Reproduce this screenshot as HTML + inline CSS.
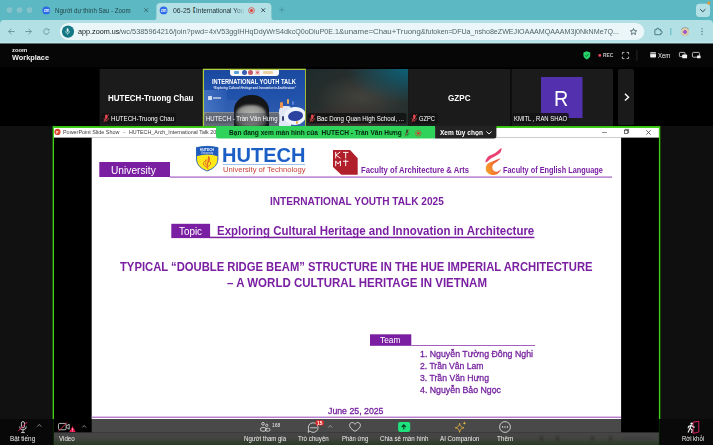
<!DOCTYPE html>
<html lang="vi"><head><meta charset="utf-8"><title>Zoom</title>
<style>
html,body{margin:0;padding:0;background:#000;}
body{width:713px;height:445px;position:relative;overflow:hidden;font-family:"Liberation Sans","Noto Sans CJK SC",sans-serif;}
.a{position:absolute;}
.t{position:absolute;white-space:nowrap;line-height:normal;transform-origin:0 0;}
svg{position:absolute;overflow:visible;}
.tile{position:absolute;top:69px;height:57.2px;background:#1b1b1b;}
.pill{position:absolute;background:rgba(18,18,18,.88);border-radius:2px;height:10.6px;top:113px;}
</style></head><body>

<!-- ============ browser chrome ============ -->
<svg style="left:0px;top:0px" width="713" height="27"><rect x="0" y="0" width="713" height="27" fill="#5cb8c2"/></svg>
<svg style="left:0px;top:20px" width="713" height="24"><path d="M4 0H709A4 4 0 0 1 713 4V23.4H0V4A4 4 0 0 1 4 0Z" fill="#b3e0e5"/></svg>
<div class="a" style="left:0;top:41.2px;width:713px;height:2.2px;background:linear-gradient(#b3e0e5,#c6e9ed);"></div>
<!-- traffic lights -->
<svg style="left:6px;top:7px" width="7" height="6"><ellipse cx="3.5" cy="3.1" rx="2.8" ry="2.8" fill="#86c2c9"/></svg>
<svg style="left:16px;top:7px" width="7" height="6"><ellipse cx="3.5" cy="3.1" rx="2.8" ry="2.8" fill="#86c2c9"/></svg>
<svg style="left:26px;top:7px" width="7" height="6"><ellipse cx="3.5" cy="3.1" rx="2.8" ry="2.8" fill="#86c2c9"/></svg>
<!-- tab 1 -->
<svg style="left:42px;top:6px" width="9" height="9"><ellipse cx="4.3" cy="4.4" rx="3.9" ry="3.9" fill="#2b6be6"/></svg>
<svg style="left:143.8px;top:8.2px" width="4.4" height="4.4" viewBox="0 0 4.4 4.4"><path d="M.3.3 4.1 4.1M4.1.3.3 4.1" stroke="#2c4f55" stroke-width=".7" fill="none"/></svg>
<!-- active tab -->
<svg style="left:156px;top:3px" width="116" height="18"><path d="M4.4 0H111.4A4 4 0 0 1 115.4 4V18H0.4V4A4 4 0 0 1 4.4 0Z" fill="#b3e0e5"/></svg>
<svg style="left:152px;top:16px" width="5" height="5"><path d="M.4 4.4A4 4 0 0 0 4.4 .4V4.4Z" fill="#b3e0e5"/></svg>
<svg style="left:271px;top:16px" width="5" height="5"><path d="M4.4 4.4A4 4 0 0 1 .4 .4V4.4Z" fill="#b3e0e5"/></svg>
<svg style="left:159px;top:6px" width="9" height="9"><ellipse cx="4.6" cy="4.4" rx="3.9" ry="3.9" fill="#2b6be6"/></svg>
<span class="a" style="left:189.6px;top:7px;font-size:6px;line-height:1;font-weight:700;color:#1f2f33;font-family:'Noto Sans CJK SC',sans-serif;">【</span>
<svg style="left:248.1px;top:6.9px" width="7" height="7" viewBox="0 0 7 7"><circle cx="3.5" cy="3.5" r="2.9" fill="none" stroke="#e3342f" stroke-width=".7"/><circle cx="3.5" cy="3.5" r="1.5" fill="#e3342f"/></svg>
<svg style="left:261px;top:8.2px" width="4.4" height="4.4" viewBox="0 0 4.4 4.4"><path d="M.3.3 4.1 4.1M4.1.3.3 4.1" stroke="#1f2f33" stroke-width=".8" fill="none"/></svg>
<svg style="left:278.6px;top:7.2px" width="5.6" height="5.6" viewBox="0 0 5.6 5.6"><path d="M2.8.2V5.4M.2 2.8H5.4" stroke="#3f8f99" stroke-width=".7" fill="none"/></svg>
<!-- tab dropdown -->
<svg style="left:696px;top:3px" width="14" height="14"><rect x="0" y="0.7" width="14" height="13.2" rx="3.5" fill="#b3e0e5"/></svg>
<svg style="left:700.2px;top:8.6px" width="5.6" height="3.4" viewBox="0 0 5.6 3.4"><path d="M.5.5 2.8 2.8 5.1.5" stroke="#17343a" stroke-width=".9" fill="none" stroke-linecap="round"/></svg>
<svg style="left:707px;top:1px" width="4" height="4"><ellipse cx="1.8" cy="2" rx="1.5" ry="1.5" fill="#f0932b"/></svg>
<!-- nav icons -->
<svg style="left:7.5px;top:28.2px" width="7" height="7" viewBox="0 0 7 7"><path d="M6.6 3.5H.8M3.4.7.6 3.5 3.4 6.3" stroke="#5a8087" stroke-width=".75" fill="none"/></svg>
<svg style="left:25px;top:28.2px" width="7" height="7" viewBox="0 0 7 7"><path d="M.4 3.5H6.2M3.6.7 6.4 3.5 3.6 6.3" stroke="#5a8087" stroke-width=".75" fill="none"/></svg>
<svg style="left:43.2px;top:28.2px" width="7" height="7" viewBox="0 0 7 7"><path d="M6.1 3.5A2.7 2.7 0 1 1 5.2 1.5" stroke="#5a8087" stroke-width=".75" fill="none"/><path d="M6.3.4V2.3H4.4Z" fill="#5a8087"/></svg>
<!-- url pill -->
<svg style="left:59px;top:23px" width="586" height="18"><rect x="0.8" y="0" width="584.5" height="17.1" rx="8.6" fill="#eaf6f7"/></svg>
<svg style="left:61px;top:25px" width="14" height="13"><ellipse cx="7" cy="6.6" rx="6.1" ry="6.1" fill="#147985"/></svg>
<svg style="left:65.4px;top:28px" width="5.2" height="7" viewBox="0 0 5.2 7"><rect x="1.7" y=".2" width="1.8" height="3.6" rx=".9" fill="#e6f6f7"/><path d="M.5 3.1A2.1 2.1 0 0 0 4.7 3.1M2.6 5.2V6.6" stroke="#e6f6f7" stroke-width=".6" fill="none"/></svg>
<svg style="left:629.6px;top:28.2px" width="7" height="7" viewBox="0 0 7 7"><path d="M3.5.5 4.4 2.6 6.7 2.8 5 4.3 5.5 6.5 3.5 5.3 1.5 6.5 2 4.3.3 2.8 2.6 2.6Z" stroke="#274349" stroke-width=".7" fill="none" stroke-linejoin="round"/></svg>
<svg style="left:653.8px;top:27.4px" width="8.4" height="8.4" viewBox="0 0 8.4 8.4"><path d="M.9 2.6H2.7A1.15 1.15 0 1 1 4.9 2.6H6.7V4.2A1.15 1.15 0 1 1 6.7 6.4V7.7H.9Z" stroke="#33666e" stroke-width=".8" fill="none" stroke-linejoin="round"/></svg>
<svg style="left:670px;top:28px" width="2" height="7"><rect x="0.4" y="0" width="0.9" height="7" fill="#55b3bd"/></svg>
<div class="a" style="left:680.6px;top:27.4px;width:8.4px;height:8.4px;border-radius:50%;background:radial-gradient(circle at 50% 55%,#a05cc0 0 28%,#d9c9a8 30% 60%,#9aa8a0 62%);"></div>
<svg style="left:701px;top:28px" width="3" height="8"><circle cx="1" cy=".8" r=".65" fill="#3c6a72"/><circle cx="1" cy="3.5" r=".65" fill="#3c6a72"/><circle cx="1" cy="6.2" r=".65" fill="#3c6a72"/></svg>

<!-- ============ zoom header ============ -->
<svg style="left:0px;top:44px" width="713" height="24"><rect x="0" y="0.6" width="713" height="22.6" fill="#060606"/></svg>
<!-- shield -->
<svg style="left:582.6px;top:51px" width="7.6" height="8.6" viewBox="0 0 7.6 8.6"><path d="M3.8.2 7.2 1.4V4.2C7.2 6.2 5.6 7.7 3.8 8.4 2 7.7.4 6.2.4 4.2V1.4Z" fill="#27d36a"/><path d="M2.2 4.3 3.4 5.5 5.5 3.1" stroke="#062" stroke-width=".9" fill="none"/></svg>
<svg style="left:598px;top:54px" width="4" height="3"><ellipse cx="1.8" cy="1.4" rx="1.4" ry="1.4" fill="#f0475c"/></svg>
<svg style="left:622px;top:51.8px" width="7" height="7" viewBox="0 0 7 7"><path d="M.4 2.4V.4H2.4M4.6.4H6.6V2.4M6.6 4.6V6.6H4.6M2.4 6.6H.4V4.6" stroke="#e8e8e8" stroke-width=".75" fill="none"/></svg>
<svg style="left:636px;top:50px" width="2" height="11"><rect x="0.5" y="0" width="0.8" height="10.6" fill="#2e2e2e"/></svg>
<svg style="left:650px;top:52.4px" width="6.2" height="5.6" viewBox="0 0 6.2 5.6"><rect x=".2" y=".2" width="5.8" height="5.2" rx=".7" fill="#f0f0f0"/><rect x=".2" y="1.5" width="5.8" height=".6" fill="#070707"/></svg>
<svg style="left:679px;top:52px" width="8.4" height="6.6" viewBox="0 0 8.4 6.6"><rect x=".4" y=".4" width="5.6" height="4.2" rx=".8" fill="none" stroke="#f0f0f0" stroke-width=".75"/><rect x="3.2" y="2.6" width="4.9" height="3.7" rx=".6" fill="#f0f0f0"/></svg>
<svg style="left:692.4px;top:52px" width="8.8" height="6.6" viewBox="0 0 8.8 6.6"><rect x=".4" y=".4" width="7" height="4.8" rx="1" fill="none" stroke="#f0f0f0" stroke-width=".75"/><rect x="5" y="3.4" width="3.6" height="2.8" rx=".5" fill="#f0f0f0"/></svg>

<!-- ============ gallery ============ -->
<svg style="left:99px;top:69px" width="103" height="58"><rect x="0.6" y="0" width="102.3" height="57.2" fill="#1b1b1b"/></svg>
<!-- tile2 virtual bg -->
<svg style="left:202px;top:68px" width="104" height="59"><rect x="0.7" y="0.7" width="103.2" height="58" fill="#b0cc40"/></svg>
<div class="a" style="left:203.8px;top:69.8px;width:101px;height:56.9px;overflow:hidden;background:linear-gradient(180deg,#1b49a0 0,#2152ab 45%,#2a58ab 70%,#3560ac 100%);">
  <div class="a" style="left:0;top:20px;width:23px;height:24px;background:linear-gradient(90deg,rgba(96,140,214,.55),rgba(70,116,196,.25));filter:blur(.6px);"></div>
  <div class="a" style="left:23px;top:30px;width:14px;height:14px;background:rgba(60,104,186,.4);filter:blur(.6px);"></div>
  <div class="a" style="left:0;top:42.5px;width:80px;height:15px;background:linear-gradient(180deg,#858c98 0,#6d7482 60%,#5d6472 100%);filter:blur(.5px);"></div>
  <div class="a" style="left:25.8px;top:-1px;width:49.5px;height:7px;background:#f7f8fa;border-radius:0 0 3px 3px;"></div>
  <div class="a" style="left:30.5px;top:1.2px;width:4.4px;height:3.2px;background:#5aa0d8;border-radius:1px;"></div>
  <div class="a" style="left:37.9px;top:.4px;width:5px;height:5px;border-radius:50%;background:#3a5db4;"></div>
  <div class="a" style="left:44.7px;top:.4px;width:5px;height:5px;border-radius:50%;background:#c45a68;"></div>
  <div class="a" style="left:51.5px;top:.4px;width:5px;height:5px;border-radius:50%;background:#d65050;box-shadow:inset 0 0 0 1.2px #f7e3e3;"></div>
  <div class="a" style="left:59.5px;top:1.4px;width:10px;height:2.8px;background:#ecd3a4;border-radius:1px;"></div>
  <div class="a" style="left:4.6px;top:26.4px;width:3.4px;height:3.4px;background:#d5ddf0;border-radius:.5px;"></div>
  <div class="a" style="left:9px;top:27.4px;width:8px;height:1.5px;background:#9fb2dc;"></div>
  <!-- illustration -->
  <div class="a" style="left:75px;top:36px;width:12px;height:21px;border-radius:5px 3px 0 0;background:#dfe6f4;filter:blur(.5px);"></div>
  <div class="a" style="left:80px;top:37.6px;width:21.5px;height:18px;border-radius:50%;background:#eef2fa;transform:rotate(-8deg);"></div>
  <div class="a" style="left:84px;top:41.4px;width:15px;height:9.6px;border-radius:50%;background:#2b429e;transform:rotate(-8deg);"></div>
  <div class="a" style="left:76.6px;top:32.4px;width:2.6px;height:5.6px;border-radius:1.2px;background:#e9954a;"></div>
  <div class="a" style="left:83px;top:29.6px;width:2.2px;height:4.6px;border-radius:1.1px;background:#f0b05a;"></div>
  <div class="a" style="left:88.4px;top:31.6px;width:2px;height:4px;border-radius:1px;background:#5a82d8;"></div>
  <div class="a" style="left:78px;top:46px;width:2.4px;height:5.4px;border-radius:1.2px;background:#39457a;"></div>
  <div class="a" style="left:92px;top:51px;width:2.2px;height:3.6px;border-radius:1.1px;background:#e9b04a;"></div>
  <!-- person -->
  <div class="a" style="left:30px;top:25.6px;width:35px;height:40px;border-radius:17px 17px 5px 5px/15px 15px 5px 5px;background:#141618;filter:blur(.7px);"></div>
  <div class="a" style="left:32.6px;top:34.8px;width:30px;height:25px;border-radius:12px 12px 6px 6px/9px 9px 6px 6px;background:radial-gradient(ellipse 70% 60% at 50% 35%,#b2b2ae 0,#9a9a96 45%,#6a6a68 80%,#333 100%);filter:blur(1px);"></div>
</div>
<!-- tile3 blurred -->
<div class="tile" style="left:306.4px;width:101.3px;background:radial-gradient(ellipse 60% 60% at 100% 0,#0c6178 0,rgba(12,97,120,0) 100%),radial-gradient(ellipse 55% 55% at 45% 110%,#453230 0,rgba(69,50,48,0) 100%),radial-gradient(ellipse 45% 40% at 55% 50%,#42423d 0,rgba(66,66,61,0) 100%),linear-gradient(135deg,#1e2b2b 0,#2c302e 50%,#24302f 100%);"></div>
<svg style="left:408px;top:69px" width="103" height="58"><rect x="0.1" y="0" width="102.4" height="57.2" fill="#1b1b1b"/></svg>
<svg style="left:511px;top:69px" width="102" height="58"><rect x="0.5" y="0" width="101.5" height="57.2" fill="#1b1b1b"/></svg>
<svg style="left:541px;top:77px" width="42" height="41"><rect x="0" y="0" width="41.5" height="41" fill="#5230ae"/></svg>
<svg style="left:618px;top:69px" width="16" height="57"><rect x="0" y="0" width="16" height="56.2" rx="2" fill="#1a1a1a"/></svg>
<svg style="left:624.2px;top:92.8px" width="5.8" height="8.4" viewBox="0 0 5.8 8.4"><path d="M.9.8 4.6 4.2.9 7.6" stroke="#fff" stroke-width="1.35" fill="none"/></svg>
<!-- labels -->
<svg style="left:101px;top:113px" width="76" height="11"><rect x="0.4" y="0" width="74.7" height="10.6" rx="2" fill="rgba(18,18,18,.88)"/></svg>
<svg style="left:204px;top:113px" width="76" height="11"><rect x="0.6" y="0" width="75" height="10.6" rx="2" fill="rgba(40,45,60,.3)"/></svg>
<svg style="left:307px;top:113px" width="100" height="11"><rect x="0.6" y="0" width="98.8" height="10.6" rx="2" fill="rgba(18,18,18,.88)"/></svg>
<svg style="left:410px;top:113px" width="28" height="11"><rect x="0.6" y="0" width="27" height="10.6" rx="2" fill="rgba(18,18,18,.88)"/></svg>
<svg style="left:512px;top:113px" width="57" height="11"><rect x="0.8" y="0" width="56" height="10.6" rx="2" fill="rgba(18,18,18,.88)"/></svg>
<svg class="mm" style="left:102.6px;top:114px" width="6.4" height="8.6" viewBox="0 0 6.4 8.6"><rect x="2.1" y=".6" width="2.2" height="4.4" rx="1.1" fill="#e5484d"/><path d="M.9 4.1A2.3 2.3 0 0 0 5.5 4.1M3.2 6.4V7.8" stroke="#e5484d" stroke-width=".7" fill="none"/><path d="M5.7.4.7 8.2" stroke="#e5484d" stroke-width=".8"/></svg>
<svg class="mm" style="left:308.6px;top:114px" width="6.4" height="8.6" viewBox="0 0 6.4 8.6"><rect x="2.1" y=".6" width="2.2" height="4.4" rx="1.1" fill="#e5484d"/><path d="M.9 4.1A2.3 2.3 0 0 0 5.5 4.1M3.2 6.4V7.8" stroke="#e5484d" stroke-width=".7" fill="none"/><path d="M5.7.4.7 8.2" stroke="#e5484d" stroke-width=".8"/></svg>
<svg class="mm" style="left:411.4px;top:114px" width="6.4" height="8.6" viewBox="0 0 6.4 8.6"><rect x="2.1" y=".6" width="2.2" height="4.4" rx="1.1" fill="#e5484d"/><path d="M.9 4.1A2.3 2.3 0 0 0 5.5 4.1M3.2 6.4V7.8" stroke="#e5484d" stroke-width=".7" fill="none"/><path d="M5.7.4.7 8.2" stroke="#e5484d" stroke-width=".8"/></svg>

<!-- ============ shared window ============ -->
<svg style="left:0px;top:126px" width="53" height="319"><rect x="0" y="0" width="52.5" height="319" fill="#111"/></svg>
<svg style="left:660px;top:126px" width="53" height="319"><rect x="0.3" y="0" width="52.7" height="319" fill="#0f0f0f"/></svg>
<svg style="left:52px;top:126px" width="609" height="319"><rect x="0.6" y="0.1" width="607.7" height="318.9" fill="#3fd017"/></svg>
<svg style="left:54px;top:128px" width="605" height="316"><rect x="0" y="0" width="604.9" height="315.4" fill="#000"/></svg>
<svg style="left:54px;top:128px" width="605" height="10"><rect x="0" y="0" width="604.9" height="9.6" fill="#fff"/></svg>
<!-- ppt icon -->
<svg style="left:54px;top:128px" width="7" height="8"><ellipse cx="3.5" cy="3.9" rx="3.1" ry="3.1" fill="#d84a2b"/></svg>
<svg style="left:602px;top:131.6px" width="5" height="1" viewBox="0 0 5 1"><path d="M0 .5H5" stroke="#444" stroke-width=".6"/></svg>
<svg style="left:623.6px;top:129.4px" width="5" height="5" viewBox="0 0 5 5"><rect x=".4" y="1.2" width="3.4" height="3.4" fill="none" stroke="#333" stroke-width=".7"/><path d="M1.4 1.2V.4H4.6V3.6H3.8" fill="none" stroke="#333" stroke-width=".7"/></svg>
<svg style="left:646.2px;top:129.6px" width="5" height="5" viewBox="0 0 5 5"><path d="M.3.3 4.7 4.7M4.7.3.3 4.7" stroke="#333" stroke-width=".7"/></svg>
<!-- slide -->
<svg style="left:91px;top:137px" width="531" height="296"><rect x="0.7" y="0.5" width="529.4" height="295.1" fill="#fff"/></svg>
<!-- taskbar below slide (under toolbar) -->
<svg style="left:54px;top:432px" width="605" height="11"><rect x="0" y="0.4" width="604.9" height="10.6" fill="#f2f2f2"/></svg>
<div class="a" style="left:54px;top:437px;width:604.9px;height:8px;background:linear-gradient(#f2f2f2 0,#93cb82 100%);"></div>
<div class="a" style="left:539.5px;top:436.2px;width:3.4px;height:4.6px;background:#b2b2b2;filter:blur(1px);"></div>
<div class="a" style="left:555.5px;top:436.2px;width:3.6px;height:4.6px;background:#b2b2b2;filter:blur(1px);"></div>
<div class="a" style="left:591px;top:436.2px;width:3.4px;height:4.6px;background:#b2b2b2;filter:blur(1px);"></div>
<div class="a" style="left:608.5px;top:436.2px;width:3.6px;height:4.6px;background:#b2b2b2;filter:blur(1px);"></div>
<div class="a" style="left:473px;top:436.2px;width:3px;height:4.6px;background:#b2b2b2;filter:blur(1px);"></div>
<div class="a" style="left:623px;top:436.6px;width:30px;height:3.4px;background:#d2d2d2;filter:blur(1px);"></div>
<!-- university row -->
<svg style="left:99px;top:162px" width="71" height="15"><rect x="0.3" y="0" width="70.7" height="15" fill="#7a1fa2"/></svg>
<svg style="left:170px;top:176px" width="442" height="2"><rect x="0" y="0.5" width="442" height="1.2" fill="#a55fc2"/></svg>
<!-- hutech shield -->
<svg style="left:195.6px;top:145.6px" width="22.4" height="25.4" viewBox="0 0 22.4 25.4">
<path d="M.5 1.5Q11.2-.9 21.9 1.500000000000001V13C21.9 19.5 16.4 23.2 11.2 25 6 23.2.5 19.5.5 13Z" fill="#ffe81a" stroke="#1d5bbf" stroke-width=".9"/>
<path d="M.5 1.5Q11.2-.9 21.9 1.5V10.2Q11.2 6.800000000000001.5 10.2Z" fill="#1d5bbf"/>
<path d="M12.6 10.6C14 12.2 13.6 14 12.2 15.2 14 15 15.2 16.4 14.4 18.2 13.6 20 11.8 20.2 11.2 21.6 11.4 22.6 12 23 12.6 23.4M11.2 21.6C10.2 20.6 7.4 20 7.4 17.6 7.4 15.4 9.6 15.2 10 13.6 10.6 15.2 9.4 16 9.4 17.4 9.4 18.8 10.8 19.2 11.4 19.6 10.8 18 11.4 17 12.2 16.2 13.2 15.2 13.4 13 12.6 10.600000000000001Z" fill="none" stroke="#e0562a" stroke-width=".8" stroke-linejoin="round"/>
</svg>
<svg style="left:222px;top:164px" width="84" height="1"><rect x="0.8" y="0.1" width="82.4" height="0.8" fill="#8ab3e6"/></svg>
<!-- KTMT -->
<svg style="left:332.9px;top:150.1px" width="24.7" height="24.7" viewBox="0 0 24.7 24.7">
<path d="M0 0H17.1L24.7 8.3V24.7H8.3L0 17Z" fill="#b01f2a"/>
<g stroke="#fff" stroke-width=".95" fill="none"><path d="M2.7 1.9V8.3M7.4 1.9 3 5.1 7.5 8.3"/><path d="M10 2.4H15.4M12.7 2.4V8.3"/><path d="M2.7 16.2V10.9L5.05 14 7.4 10.9V16.2"/><path d="M10 11.3H15.4M12.7 9.6V16.2"/></g>
</svg>
<!-- flame e -->
<svg style="left:484.5px;top:148px" width="17" height="27.2" viewBox="0 0 17 27.2">
<defs><linearGradient id="fg" x1="0" y1=".6" x2="1" y2=".3"><stop offset="0" stop-color="#f7a12c"/><stop offset=".45" stop-color="#f47a2e"/><stop offset="1" stop-color="#e8413f"/></linearGradient></defs>
<path d="M16.20 0.16C15.30 0.30 12.26 3.62 10.14 4.98C8.02 6.34 5.08 6.99 3.48 8.31C1.89 9.63 0.92 11.92 0.57 12.89C0.22 13.86 0.50 14.55 1.40 14.13C2.30 13.71 4.32 11.50 5.98 10.39C7.65 9.28 9.79 8.52 11.39 7.48C12.99 6.44 14.75 5.37 15.55 4.15C16.35 2.93 17.10 0.02 16.20 0.16Z" fill="#ea3f72"/>
<path d="M15.30 10.39C14.61 10.39 10.59 11.99 8.48 12.89C6.37 13.79 3.93 14.62 2.65 15.80C1.37 16.98 0.96 18.57 0.82 19.96C0.68 21.35 0.82 22.94 1.82 24.12C2.82 25.30 5.01 26.75 6.81 27.03C8.61 27.31 11.11 26.68 12.63 25.78C14.16 24.88 16.03 21.97 15.96 21.62C15.89 21.27 13.47 23.56 12.22 23.70C10.97 23.84 9.31 23.21 8.48 22.45C7.65 21.69 7.16 20.24 7.23 19.13C7.30 18.02 7.99 16.84 8.89 15.80C9.79 14.76 11.56 13.79 12.63 12.89C13.70 11.99 15.99 10.39 15.30 10.39Z" fill="url(#fg)"/>
</svg>
<!-- topic row -->
<svg style="left:171px;top:223px" width="40" height="16"><rect x="0.3" y="0.8" width="38.8" height="14.3" fill="#7a1fa2"/></svg>
<svg style="left:210px;top:236px" width="325" height="3"><rect x="0" y="0.7" width="324.4" height="1.5" fill="#7a1fa2"/></svg>
<!-- team row -->
<svg style="left:370px;top:334px" width="42" height="12"><rect x="0" y="0.3" width="41.3" height="11.5" fill="#7a1fa2"/></svg>
<svg style="left:411px;top:345px" width="125" height="2"><rect x="0.3" y="0.1" width="123.8" height="0.9" fill="#9a4fb8"/></svg>
<!-- bottom line -->
<svg style="left:91px;top:416px" width="531" height="2"><rect x="0.7" y="0.6" width="529.4" height="1.3" fill="#b070c8"/></svg>

<!-- banner -->
<svg style="left:216px;top:126px" width="220" height="13"><path d="M0 0H219.1V12.4H2.5A2.5 2.5 0 0 1 0 9.9V0Z" fill="#30d35a"/></svg>
<svg style="left:435px;top:126px" width="62" height="13"><path d="M0.1 0H61.4V9.9A2.5 2.5 0 0 1 58.9 12.4H0.1V0Z" fill="#232323"/></svg>
<svg style="left:403.8px;top:128.8px" width="6" height="8" viewBox="0 0 6 8"><rect x="2" y=".5" width="2" height="4" rx="1" fill="#1d5a2b"/><path d="M.9 3.8A2.1 2.1 0 0 0 5.100000000000001 3.8M3 5.9V7.2" stroke="#1d5a2b" stroke-width=".6" fill="none"/><path d="M5.3.4.8 7.4" stroke="#c0392b" stroke-width=".6"/></svg>
<svg style="left:414.8px;top:129.6px" width="6.6" height="6.6" viewBox="0 0 6.6 6.6"><circle cx="3.3" cy="3.3" r="2.8" fill="none" stroke="#d63a2f" stroke-width=".6"/><circle cx="3.3" cy="3.3" r="1.4" fill="#d63a2f"/></svg>
<svg style="left:485.6px;top:131.4px" width="6" height="3.6" viewBox="0 0 6 3.6"><path d="M.4.5 3 3 5.6.5" stroke="#fff" stroke-width=".9" fill="none"/></svg>

<!-- ============ bottom toolbar overlay ============ -->
<svg style="left:0px;top:419px" width="713" height="26"><rect x="0" y="0" width="713" height="26" fill="rgba(0,0,0,.715)"/></svg>
<svg style="left:0px;top:419px" width="53" height="26"><rect x="0" y="0" width="52.5" height="26" fill="#080808"/></svg>
<svg style="left:660px;top:419px" width="53" height="26"><rect x="0.3" y="0" width="52.7" height="26" fill="#090909"/></svg>

<svg style="left:52px;top:419px" width="2" height="26"><rect x="0.5" y="0" width="1.5" height="26" fill="rgba(0,0,0,.45)"/></svg>
<svg style="left:658px;top:419px" width="3" height="26"><rect x="0.9" y="0" width="1.4" height="26" fill="rgba(0,0,0,.45)"/></svg>
<!-- mic muted -->
<svg style="left:17.6px;top:420.8px" width="10" height="12.4" viewBox="0 0 10 12.4"><rect x="3.4" y=".6" width="3.1" height="6.3" rx="1.55" fill="none" stroke="#f0f0f0" stroke-width=".8"/><path d="M1.6 5.5A3.35 3.35 0 0 0 8.3 5.5M4.95 8.9V11.3M3.1 11.6H6.8" stroke="#f0f0f0" stroke-width=".8" fill="none"/><path d="M9.3 1 .3 10" stroke="#e8235e" stroke-width="1"/></svg>
<svg class="car" style="left:37.4px;top:424.4px" width="4.6" height="2.9" viewBox="0 0 4.6 2.9"><path d="M.3 2.6 2.3.5 4.3 2.6" stroke="#bdbdbd" stroke-width=".7" fill="none"/></svg>
<!-- video -->
<svg style="left:57.6px;top:421.6px" width="12" height="9.4" viewBox="0 0 12 9.4"><rect x=".5" y="1.4" width="7.6" height="6.4" rx="1.2" fill="none" stroke="#f0f0f0" stroke-width=".75"/><path d="M8.4 4 11.2 2.2V7.2L8.4 5.4" fill="none" stroke="#f0f0f0" stroke-width=".75"/><path d="M9.4.3.6 9" stroke="#e0324e" stroke-width=".9"/></svg>
<svg style="left:68.8px;top:425.6px" width="7" height="6.4" viewBox="0 0 7 6.4"><path d="M3.5.3 6.8 6.1H.2Z" fill="#e8174f"/><path d="M3.5 2.4V4.2M3.5 4.9V5.5" stroke="#fff" stroke-width=".7"/></svg>
<svg class="car" style="left:81.6px;top:424.6px" width="4.4" height="2.8" viewBox="0 0 4.4 2.8"><path d="M.3 2.5 2.2.5 4.1 2.500000000000001" stroke="#bdbdbd" stroke-width=".7" fill="none"/></svg>
<!-- participants -->
<svg style="left:259.6px;top:422px" width="10.4" height="9.6" viewBox="0 0 10.4 9.6"><circle cx="3" cy="1.8" r="1.35" fill="none" stroke="#f0f0f0" stroke-width=".75"/><circle cx="6.8" cy="3.3" r="1.15" fill="none" stroke="#f0f0f0" stroke-width=".7"/><rect x=".4" y="5.5" width="5.7" height="3.7" rx="1.85" fill="none" stroke="#f0f0f0" stroke-width=".75"/><rect x="5.5" y="6.3" width="4.5" height="2.9" rx="1.45" fill="none" stroke="#f0f0f0" stroke-width=".7"/></svg>
<!-- chat -->
<svg style="left:307px;top:421.4px" width="12" height="12" viewBox="0 0 12 12"><path d="M6.3 1.8A4.8 4.8 0 1 1 2.9 10L1.2 11.4 1.6 8.3A4.8 4.8 0 0 1 6.3 1.8Z" fill="none" stroke="#f0f0f0" stroke-width=".75" stroke-linejoin="round"/><path d="M3.2 6.8H10" stroke="#f0f0f0" stroke-width=".75"/></svg>
<svg style="left:315px;top:420px" width="9" height="6"><rect x="0.6" y="0.2" width="8.2" height="5.4" rx="1.6" fill="#e02828"/></svg>
<svg class="car" style="left:327.8px;top:424.5px" width="4.6" height="2.9" viewBox="0 0 4.6 2.9"><path d="M.3 2.6 2.3.5 4.3 2.6" stroke="#bdbdbd" stroke-width=".7" fill="none"/></svg>
<!-- heart -->
<svg style="left:348.8px;top:422.2px" width="12" height="10" viewBox="0 0 12 10"><path d="M6 9.4C2.4 7.2.6 5.4.6 3.2.6 1.6 1.8.5 3.2.5 4.4.5 5.4 1.2 6 2.300000000000001 6.6 1.2 7.6.5 8.8.5 10.200000000000001.5 11.4 1.6 11.4 3.2 11.4 5.4 9.6 7.2 6 9.4Z" fill="none" stroke="#f0f0f0" stroke-width=".75"/></svg>
<!-- share -->
<svg style="left:398px;top:421px" width="13" height="11"><rect x="0.1" y="0.9" width="12.1" height="10" rx="1.8" fill="#1ee27c"/></svg>
<svg style="left:401.4px;top:424px" width="5.6" height="6" viewBox="0 0 5.6 6"><path d="M2.8 5.6V1.2M.7 3 2.8.8 4.9 3" stroke="#0b3d22" stroke-width="1.1" fill="none"/></svg>
<!-- sparkle -->
<svg style="left:454.6px;top:421.4px" width="11.4" height="11.6" viewBox="0 0 11.4 11.6"><path d="M4.6 2.2C5 5.2 6 6.2 9 6.8 6 7.4 5 8.4 4.6 11.4 4.2 8.4 3.2 7.4.2 6.8 3.2 6.2 4.2 5.2 4.6 2.2Z" fill="none" stroke="#e9b840" stroke-width=".75" stroke-linejoin="round"/><path d="M9.4.3C9.6 1.6 10 2 11.2 2.2 10 2.4 9.6 2.8 9.4 4.1 9.200000000000001 2.8 8.8 2.4 7.6 2.2 8.8 2 9.200000000000001 1.6 9.4.3Z" fill="#e9b840"/></svg>
<!-- more -->
<svg style="left:498.8px;top:421.2px" width="12" height="12" viewBox="0 0 12 12"><circle cx="6" cy="6" r="5.4" fill="none" stroke="#f0f0f0" stroke-width=".75"/><circle cx="3.6" cy="6" r=".7" fill="#f0f0f0"/><circle cx="6" cy="6" r=".7" fill="#f0f0f0"/><circle cx="8.4" cy="6" r=".7" fill="#f0f0f0"/></svg>
<!-- leave -->
<svg style="left:686.6px;top:420.8px" width="13" height="13" viewBox="0 0 13 13"><path d="M6.2 1.2 11.8.3V11L6.2 12.400000000000002Z" fill="none" stroke="#e8235e" stroke-width=".9"/><circle cx="4.6" cy="2.6" r="1.2" fill="#f0f0f0"/><path d="M4.4 4.2 3 7.2 5.2 9 4.6 12M3 7.200000000000001 1 11.4M4.4 4.2 1.6 5.4 1 7.400000000000001M4.4 4.4 6.6 6.2 7.8 6" stroke="#f0f0f0" stroke-width="1.1" fill="none"/></svg>

<span class="t" id="tab1" style="left:54.50px;top:6.71px;font-size:6.6px;font-weight:400;color:#24454b;transform:scaleX(0.9283);">Người dự thính Sau - Zoom</span>
<span class="t" id="tab2a" style="left:172.60px;top:6.80px;font-size:6.6px;font-weight:400;color:#1f2f33;transform:scaleX(1.0489);">06-25</span>
<span class="t" id="tab2c" style="left:196.20px;top:6.80px;font-size:6.6px;font-weight:400;color:#1f2f33;transform:scaleX(0.9788);-webkit-mask-image:linear-gradient(90deg,#000 80%,rgba(0,0,0,.15) 100%);">International You</span>
<span class="t" id="url0" style="left:77.80px;top:27.30px;font-size:7.6px;font-weight:400;color:#11191b;transform:scaleX(0.9498);">app.zoom.us</span>
<span class="t" id="url1" style="left:119.10px;top:27.30px;font-size:7.6px;font-weight:400;color:#506468;transform:scaleX(0.9689);">/wc/5385964216/join?pwd=</span>
<span class="t" id="url2" style="left:208.50px;top:27.30px;font-size:7.6px;font-weight:400;color:#506468;transform:scaleX(0.9428);">4xV53ggIHHqDdyWrS4dkcQ0oDiuP0E.1</span>
<span class="t" id="url3" style="left:338.50px;top:27.30px;font-size:7.6px;font-weight:400;color:#506468;transform:scaleX(1.0453);">&amp;uname=</span>
<span class="t" id="url4" style="left:372.70px;top:27.30px;font-size:7.6px;font-weight:400;color:#506468;transform:scaleX(1.0307);">Chau+Truong</span>
<span class="t" id="url5" style="left:420.50px;top:27.30px;font-size:7.6px;font-weight:400;color:#506468;transform:scaleX(0.9151);">&amp;futoken=</span>
<span class="t" id="url6" style="left:452.00px;top:27.30px;font-size:7.6px;font-weight:400;color:#506468;transform:scaleX(0.9355);">DFUa_nsho8eZWEJIOAAAMQAAAM3j0NkNMe7Q...</span>
<span class="t" id="zi1" style="left:43.60px;top:8.00px;font-size:4.8px;font-weight:700;color:#fff;transform:scaleX(0.8094);">zm</span>
<span class="t" id="zi2" style="left:160.90px;top:8.00px;font-size:4.8px;font-weight:700;color:#fff;transform:scaleX(0.8094);">zm</span>
<span class="t" id="zm" style="left:11.80px;top:46.41px;font-size:6.2px;font-weight:700;color:#f2f2f2;transform:scaleX(0.9408);">zoom</span>
<span class="t" id="wp" style="left:11.80px;top:53.00px;font-size:8px;font-weight:700;color:#f2f2f2;transform:scaleX(0.9178);">Workplace</span>
<span class="t" id="rec" style="left:602.90px;top:52.21px;font-size:5.2px;font-weight:700;color:#c4c4c4;transform:scaleX(0.9495);">REC</span>
<span class="t" id="xem" style="left:658.00px;top:50.80px;font-size:7.2px;font-weight:400;color:#f0f0f0;transform:scaleX(0.8321);">Xem</span>
<span class="t" id="n1" style="left:108.25px;top:92.80px;font-size:9px;font-weight:700;color:#fff;transform:scaleX(0.8906);">HUTECH-Truong Chau</span>
<span class="t" id="l1" style="left:111.00px;top:115.00px;font-size:6.8px;font-weight:400;color:#fff;transform:scaleX(0.9012);">HUTECH-Truong Chau</span>
<span class="t" id="l2" style="left:205.60px;top:114.21px;font-size:7.2px;font-weight:400;color:#fff;transform:scaleX(0.8363);">HUTECH - Trần Văn Hưng</span>
<span class="t" id="l3" style="left:316.50px;top:115.00px;font-size:6.8px;font-weight:400;color:#fff;transform:scaleX(0.9029);">Bac Dong Quan High School, ...</span>
<span class="t" id="n4" style="left:447.70px;top:92.80px;font-size:9px;font-weight:700;color:#fff;transform:scaleX(0.8994);">GZPC</span>
<span class="t" id="l4" style="left:419.00px;top:115.00px;font-size:6.8px;font-weight:400;color:#fff;transform:scaleX(0.8470);">GZPC</span>
<span class="t" id="l5" style="left:514.00px;top:115.00px;font-size:6.8px;font-weight:400;color:#fff;transform:scaleX(0.8697);">KMITL , RAN SHAO</span>
<span class="t" id="R" style="left:554.00px;top:85.61px;font-size:22px;font-weight:400;color:#fff;transform:scaleX(0.8999);">R</span>
<span class="t" id="v2a" style="left:212.30px;top:77.91px;font-size:6.8px;font-weight:700;color:#fff;transform:scaleX(0.8385);">INTERNATIONAL YOUTH TALK</span>
<span class="t" id="v2b" style="left:212.80px;top:86.41px;font-size:2.9px;font-weight:700;color:#e8eefc;transform:scaleX(1.0051);font-style:italic;">“Exploring Cultural Heritage and Innovation in Architecture”</span>
<span class="t" id="ppt" style="left:63.00px;top:129.00px;font-size:5.6px;font-weight:400;color:#3a3a3a;transform:scaleX(0.9698);">PowerPoint Slide Show</span>
<span class="t" id="ppt2" style="left:123.20px;top:129.00px;font-size:5.6px;font-weight:400;color:#3a3a3a;">-</span>
<span class="t" id="ppt3" style="left:128.60px;top:129.00px;font-size:5.6px;font-weight:400;color:#3a3a3a;transform:scaleX(0.9582);">HUTECH_Arch_International Talk 20</span>
<span class="t" id="ban" style="left:228.50px;top:129.21px;font-size:7.1px;font-weight:700;color:#06240f;transform:scaleX(0.9246);white-space:pre;">Bạn đang xem màn hình của  HUTECH - Trần Văn Hưng</span>
<span class="t" id="opt" style="left:439.70px;top:129.21px;font-size:7.1px;font-weight:700;color:#fff;transform:scaleX(0.9223);">Xem tùy chọn</span>
<span class="t" id="uni" style="left:111.00px;top:163.61px;font-size:10.5px;font-weight:400;color:#fff;transform:scaleX(0.9708);">University</span>
<span class="t" id="hut" style="left:222.00px;top:144.00px;font-size:20.2px;font-weight:700;color:#1b5fc6;transform:scaleX(0.9926);">HUTECH</span>
<span class="t" id="uot" style="left:222.50px;top:165.00px;font-size:7.6px;font-weight:400;color:#c8423a;transform:scaleX(1.0040);">University of Technology</span>
<span class="t" id="fa" style="left:361.25px;top:165.21px;font-size:8.8px;font-weight:700;color:#7a1fa2;transform:scaleX(0.8710);">Faculty of Architecture & Arts</span>
<span class="t" id="fe" style="left:503.30px;top:165.21px;font-size:8.8px;font-weight:700;color:#7a1fa2;transform:scaleX(0.8334);">Faculty of English Language</span>
<span class="t" id="iyt" style="left:269.50px;top:195.00px;font-size:11.4px;font-weight:700;color:#7a1fa2;transform:scaleX(0.8866);">INTERNATIONAL YOUTH TALK 2025</span>
<span class="t" id="top" style="left:178.50px;top:224.71px;font-size:10.5px;font-weight:400;color:#fff;transform:scaleX(0.9382);">Topic</span>
<span class="t" id="exp" style="left:217.00px;top:224.00px;font-size:12.4px;font-weight:700;color:#7a1fa2;transform:scaleX(0.9266);">Exploring Cultural Heritage and Innovation in Architecture</span>
<span class="t" id="h1" style="left:120.00px;top:258.61px;font-size:12.8px;font-weight:700;color:#7a1fa2;transform:scaleX(0.8795);">TYPICAL “DOUBLE RIDGE BEAM” STRUCTURE IN THE HUE IMPERIAL ARCHITECTURE</span>
<span class="t" id="h2" style="left:226.75px;top:275.21px;font-size:12.8px;font-weight:700;color:#7a1fa2;transform:scaleX(0.8993);">– A WORLD CULTURAL HERITAGE IN VIETNAM</span>
<span class="t" id="team" style="left:379.50px;top:335.30px;font-size:9.3px;font-weight:400;color:#fff;transform:scaleX(0.9017);">Team</span>
<span class="t" id="m1" style="left:419.50px;top:348.00px;font-size:9.8px;font-weight:400;color:#74209e;transform:scaleX(0.8962);-webkit-text-stroke:.3px #74209e;">1. Nguyễn Tường Đông Nghi</span>
<span class="t" id="m2" style="left:419.50px;top:360.30px;font-size:9.8px;font-weight:400;color:#74209e;transform:scaleX(0.8766);-webkit-text-stroke:.3px #74209e;">2. Trần Vân Lam</span>
<span class="t" id="m3" style="left:419.50px;top:372.21px;font-size:9.8px;font-weight:400;color:#74209e;transform:scaleX(0.8857);-webkit-text-stroke:.3px #74209e;">3. Trần Văn Hưng</span>
<span class="t" id="m4" style="left:419.50px;top:384.00px;font-size:9.8px;font-weight:400;color:#74209e;transform:scaleX(0.8960);-webkit-text-stroke:.3px #74209e;">4. Nguyễn Bảo Ngọc</span>
<span class="t" id="date" style="left:328.30px;top:405.41px;font-size:9.4px;font-weight:400;color:#74209e;transform:scaleX(0.9338);-webkit-text-stroke:.3px #74209e;">June 25, 2025</span>
<span class="t" id="sh1" style="left:200.00px;top:148.00px;font-size:3.1px;font-weight:700;color:#fff;transform:scaleX(1.0861);">HUTECH</span>
<span class="t" id="sh2" style="left:200.80px;top:151.80px;font-size:2.6px;font-weight:400;color:#e8eefc;transform:scaleX(1.0711);">University</span>
<span class="t" id="pp" style="left:55.90px;top:130.00px;font-size:4.4px;font-weight:700;color:#fff;transform:scaleX(0.8170);">P</span>
<span class="t" id="b1" style="left:9.60px;top:435.00px;font-size:6.5px;font-weight:400;color:#f0f0f0;transform:scaleX(0.9816);">Bật tiếng</span>
<span class="t" id="b2" style="left:58.90px;top:435.00px;font-size:6.5px;font-weight:400;color:#f0f0f0;transform:scaleX(0.9506);">Video</span>
<span class="t" id="b3" style="left:243.80px;top:435.00px;font-size:6.5px;font-weight:400;color:#f0f0f0;transform:scaleX(0.9333);">Người tham gia</span>
<span class="t" id="b3n" style="left:271.60px;top:422.91px;font-size:4.9px;font-weight:400;color:#e8e8e8;transform:scaleX(1.0279);">168</span>
<span class="t" id="b4" style="left:298.20px;top:435.00px;font-size:6.5px;font-weight:400;color:#f0f0f0;transform:scaleX(0.9541);">Trò chuyện</span>
<span class="t" id="b4n" style="left:317.10px;top:420.80px;font-size:4.7px;font-weight:700;color:#fff;transform:scaleX(1.0156);">15</span>
<span class="t" id="b5" style="left:341.75px;top:435.00px;font-size:6.5px;font-weight:400;color:#f0f0f0;transform:scaleX(0.9185);">Phản ứng</span>
<span class="t" id="b6" style="left:380.00px;top:435.00px;font-size:6.5px;font-weight:400;color:#f0f0f0;transform:scaleX(0.9519);">Chia sẻ màn hình</span>
<span class="t" id="b7" style="left:440.00px;top:435.00px;font-size:6.5px;font-weight:400;color:#f0f0f0;transform:scaleX(0.9538);">AI Companion</span>
<span class="t" id="b8" style="left:497.00px;top:435.00px;font-size:6.5px;font-weight:400;color:#f0f0f0;transform:scaleX(0.9744);">Thêm</span>
<span class="t" id="b9" style="left:682.00px;top:435.00px;font-size:6.5px;font-weight:400;color:#f0f0f0;transform:scaleX(0.9113);">Rời khỏi</span>
</body></html>
